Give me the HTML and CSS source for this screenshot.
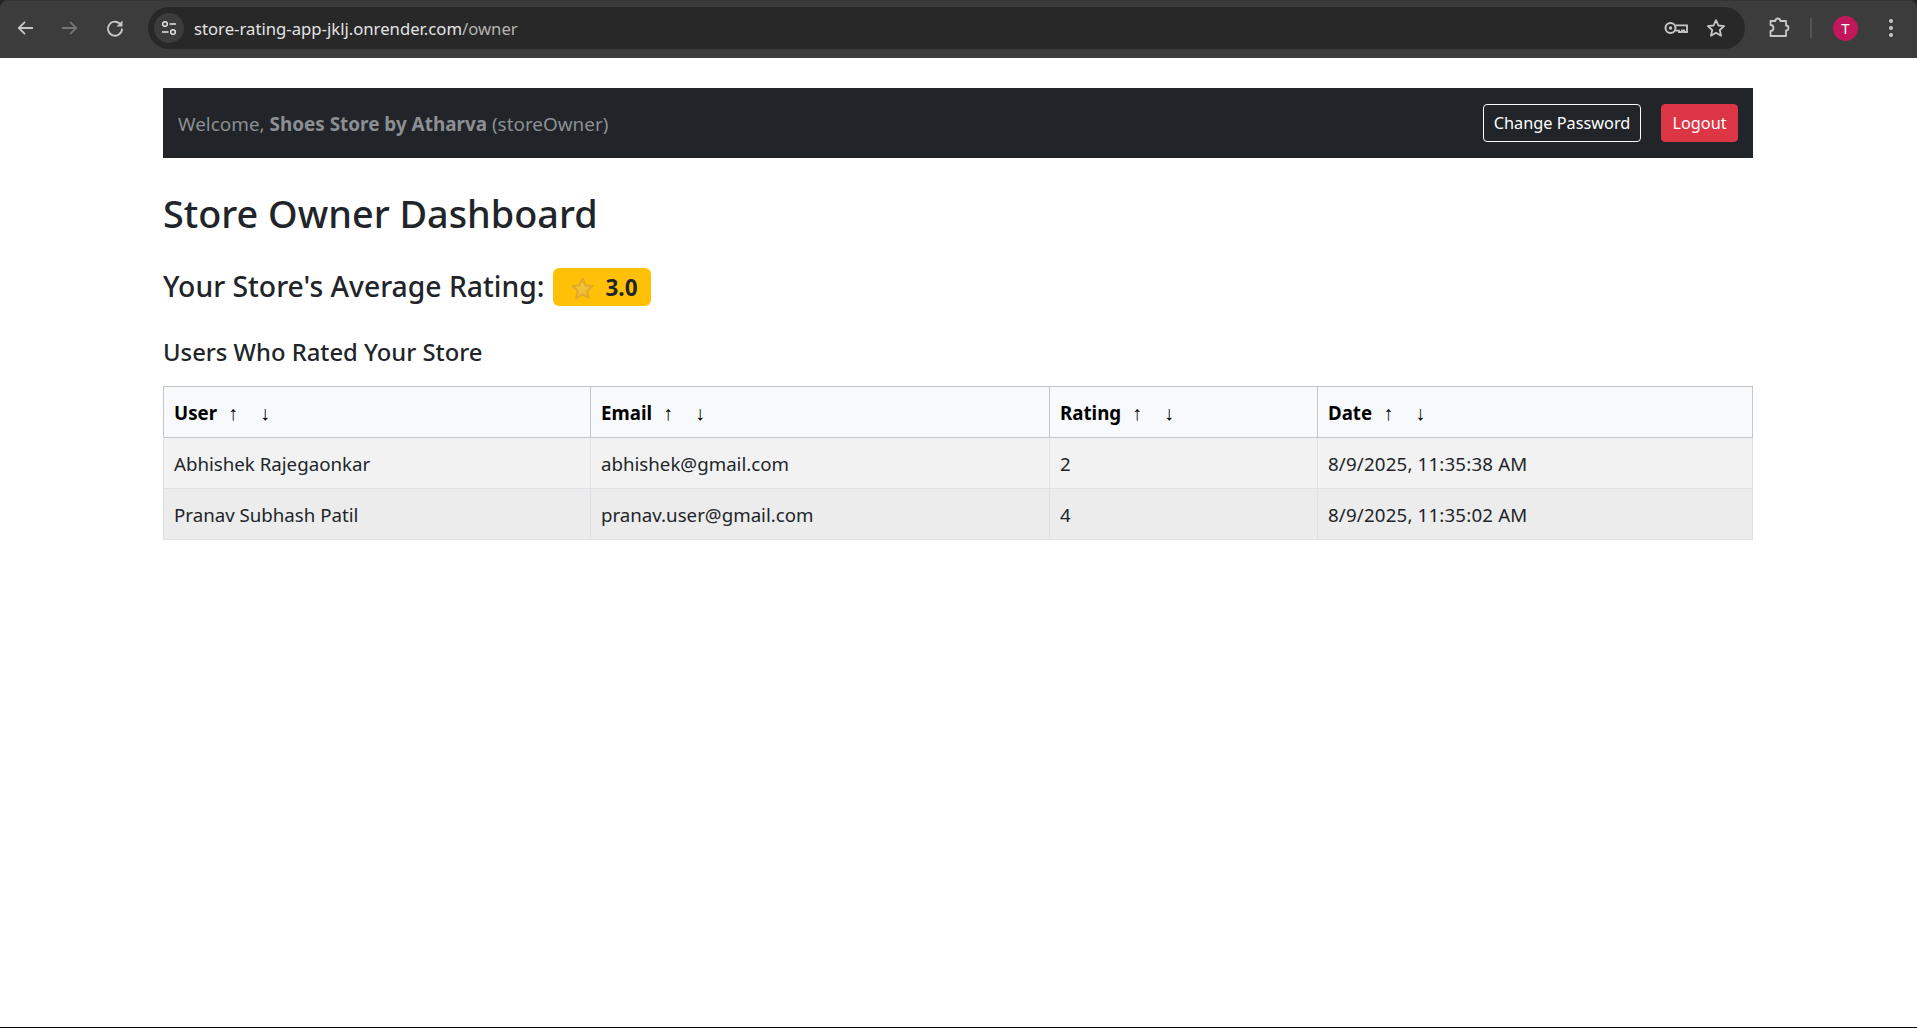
FILE: index.html
```html
<!DOCTYPE html>
<html lang="en">
<head>
<meta charset="utf-8">
<title>Store Owner Dashboard</title>
<link rel="stylesheet" href="styles.css">
</head>
<body>
<div class="frame">
<header class="chrome">
  <div class="nav-icons">
    <svg class="icon" viewBox="0 0 20 20"><path d="M18 10H4M10 3.800 3.800 10l6.200 6.200" fill="none" stroke="#c7c7c7" stroke-width="1.800"/></svg>
    <svg class="icon" viewBox="0 0 20 20"><path d="M2 10h14M10 3.800l6.200 6.200-6.200 6.200" fill="none" stroke="#757575" stroke-width="1.800"/></svg>
    <svg class="icon" viewBox="0 0 20 20"><path d="M15.800 6.800A7 7 0 1 0 17 10.500" fill="none" stroke="#c7c7c7" stroke-width="1.800"/><path d="M17.500 2.500v6h-6z" fill="#c7c7c7"/></svg>
  </div>
  <div class="omnibox">
    <span class="tune"><svg viewBox="0 0 20 20" width="20" height="20"><circle cx="6" cy="6" r="2.300" fill="none" stroke="#e3e3e3" stroke-width="1.500"/><path d="M10.500 6H17M3 14h6.500" stroke="#e3e3e3" stroke-width="1.600"/><circle cx="14" cy="14" r="2.300" fill="none" stroke="#e3e3e3" stroke-width="1.500"/></svg></span>
    <span class="url">store-rating-app-jklj.onrender.com<span class="url-path">/owner</span></span>
    <svg class="omni-icon key" viewBox="0 0 24 14"><circle cx="6.500" cy="7" r="5" fill="none" stroke="#c7c7c7" stroke-width="2"/><circle cx="6.500" cy="7" r="1.700" fill="#c7c7c7"/><path d="M11.500 4.300h11.500V11h-3V9.300h-2V11h-3V9.700h-3.500" fill="none" stroke="#c7c7c7" stroke-width="1.800"/></svg>
    <svg class="omni-icon star" viewBox="0 0 20 20"><path d="M10 2.200l2.400 5.300 5.700.6-4.300 3.900 1.200 5.700L10 14.800l-5 2.900 1.200-5.700-4.300-3.900 5.700-.6z" fill="none" stroke="#c7c7c7" stroke-width="1.800" stroke-linejoin="round"/></svg>
  </div>
  <div class="tools">
    <svg class="icon puzzle" viewBox="0 0 24 24"><path d="M3.500 5H8.300a2.500 2.500 0 0 1 5 0H19V9.500a2.500 2.500 0 0 1 0 5V20H3.500V15a3 3 0 0 0 0-6z" fill="none" stroke="#c7c7c7" stroke-width="1.800" stroke-linejoin="round"/></svg>
    <span class="divider"></span>
    <span class="avatar">T</span>
    <span class="dots"><i></i><i></i><i></i></span>
  </div>
</header>
</div>
<main class="page">
  <nav class="navbar">
    <span class="welcome">Welcome, <strong>Shoes Store by Atharva</strong> (storeOwner)</span>
    <div class="nav-actions">
      <button class="btn btn-outline">Change Password</button>
      <button class="btn btn-danger">Logout</button>
    </div>
  </nav>
  <h2 class="title">Store Owner Dashboard</h2>
  <h4 class="average">Your Store's Average Rating:
    <span class="badge"><svg class="badge-star" viewBox="0 0 24 24"><defs><linearGradient id="starfill" x1="0" y1="0" x2="0" y2="1"><stop offset="0" stop-color="#f4cb42"/><stop offset="1" stop-color="#ecb92f"/></linearGradient></defs><path d="M12 2.500l2.900 6.300 6.700.8-5 4.600 1.400 6.800-6-3.400-6 3.400 1.400-6.800-5-4.600 6.700-.8z" fill="url(#starfill)" stroke="#e2aa2a" stroke-width="2" stroke-linejoin="round"/></svg>3.0</span>
  </h4>
  <h5 class="subtitle">Users Who Rated Your Store</h5>
  <table class="ratings">
    <colgroup><col class="c1"><col class="c2"><col class="c3"><col class="c4"></colgroup>
    <thead>
      <tr>
        <th>User<span class="sort">↑</span><span class="sort">↓</span></th>
        <th>Email<span class="sort">↑</span><span class="sort">↓</span></th>
        <th>Rating<span class="sort">↑</span><span class="sort">↓</span></th>
        <th>Date<span class="sort">↑</span><span class="sort">↓</span></th>
      </tr>
    </thead>
    <tbody>
      <tr class="odd"><td>Abhishek Rajegaonkar</td><td>abhishek@gmail.com</td><td>2</td><td class="date">8/9/2025, 11:35:38 AM</td></tr>
      <tr class="even"><td>Pranav Subhash Patil</td><td>pranav.user@gmail.com</td><td>4</td><td class="date">8/9/2025, 11:35:02 AM</td></tr>
    </tbody>
  </table>
</main>
<div class="bottom-line"></div>
</body>
</html>
```
FILE: styles.css
```css
* { box-sizing: border-box; }
html, body { margin: 0; height: 100%; overflow: hidden; }
body {
  display: flex;
  flex-direction: column;
  background: #fff;
  color: #212529;
  font-family: "Noto Sans", "Open Sans", sans-serif;
}
.frame { flex: none; background: #242424; }
.chrome {
  height: 58px;
  display: flex;
  align-items: center;
  background: #3c3c3c;
  border-radius: 8px 8px 0 0;
  box-shadow: inset 0 1px 0 #333;
  padding-bottom: 2px;
}
.nav-icons { display: flex; gap: 25px; padding-left: 15px; width: 148px; align-items: center; flex: none; }
.icon { width: 20px; height: 20px; flex: none; }
.omnibox {
  width: 1597px;
  height: 42px;
  border-radius: 21px;
  background: #282828;
  display: flex;
  align-items: center;
  padding-left: 6px;
  flex: none;
}
.tune {
  width: 30px; height: 30px; border-radius: 50%;
  background: #3c3c3c;
  display: flex; align-items: center; justify-content: center;
  flex: none;
}
.url { margin-left: 10px; font-size: 16.7px; color: #e3e3e3; flex: 1; white-space: nowrap; }
.url-path { color: #b4b4b4; }
.omni-icon { flex: none; }
.key { width: 24px; height: 14px; margin-right: 18px; }
.star { width: 20px; height: 20px; margin-right: 19px; }
.tools { flex: 1; display: flex; align-items: center; }
.puzzle { width: 24px; height: 24px; margin-left: 22px; }
.divider { width: 2px; height: 20px; background: #555; margin-left: 19px; }
.avatar {
  width: 25px; height: 25px; border-radius: 50%;
  background: #c2185b; color: #fff;
  font-size: 15px;
  display: flex; align-items: center; justify-content: center;
  margin-left: 21px;
}
.dots { display: flex; flex-direction: column; gap: 3px; margin-left: 31px; }
.dots i { width: 4px; height: 4px; border-radius: 50%; background: #c7c7c7; display: block; }
.page { flex: 1; padding: 30px 164px 0 163px; }
.navbar {
  height: 70px;
  background: #212529;
  display: flex;
  align-items: center;
  justify-content: space-between;
  padding: 1px 15px 0;
}
.welcome { font-size: 18.9px; color: #8c8f93; }
.welcome strong { font-weight: 700; }
.nav-actions { display: flex; gap: 20px; margin-top: -1px; }
.btn {
  height: 38px;
  font: inherit;
  font-size: 16.3px;
  border-radius: 4px;
  color: #fff;
  padding: 0;
  cursor: pointer;
}
.btn-outline { width: 158px; background: transparent; border: 1px solid #f8f9fa; }
.btn-danger { width: 77px; background: #dc3545; border: 1px solid #dc3545; }
.title { font-size: 37.8px; font-weight: 500; margin: 32px 0 0; line-height: 48px; }
.average { font-size: 28.3px; font-weight: 500; margin: 28px 0 0; line-height: 36px; display: flex; align-items: center; gap: 9px; }
.badge {
  display: inline-flex; align-items: center; gap: 10px;
  height: 38px; width: 98px; padding: 2px 0 0 17px; margin-top: 2px;
  background: #ffc107; border-radius: 6px;
  font-size: 22.5px; font-weight: 700; color: #212529;
}
.badge-star { width: 25px; height: 25px; flex: none; }
.subtitle { font-size: 23.8px; font-weight: 500; margin: 31px 0 0; line-height: 30px; }
.ratings {
  width: 100%;
  table-layout: fixed;
  border-collapse: collapse;
  margin-top: 19px;
  font-size: 18.7px;
}
.c1 { width: 427px; }
.c2 { width: 459px; }
.c3 { width: 268px; }
.ratings th, .ratings td {
  height: 51px; padding: 0 10px; text-align: left;
  border: 1px solid #dee2e6;
  font-weight: 400;
}
.ratings th { background: #f8f9fa; font-weight: 700; color: #000; border-color: #c4c7ca; }
.ratings .date { letter-spacing: 0.17px; }
.sort {
  display: inline-block; width: 32px; text-align: center;
  font-family: "Liberation Sans", sans-serif; font-weight: 400; font-size: 20px;
}
.odd td { background: #f2f2f2; }
.even td { background: #ececec; }
.bottom-line { height: 1px; background: #000; flex: none; }
```
